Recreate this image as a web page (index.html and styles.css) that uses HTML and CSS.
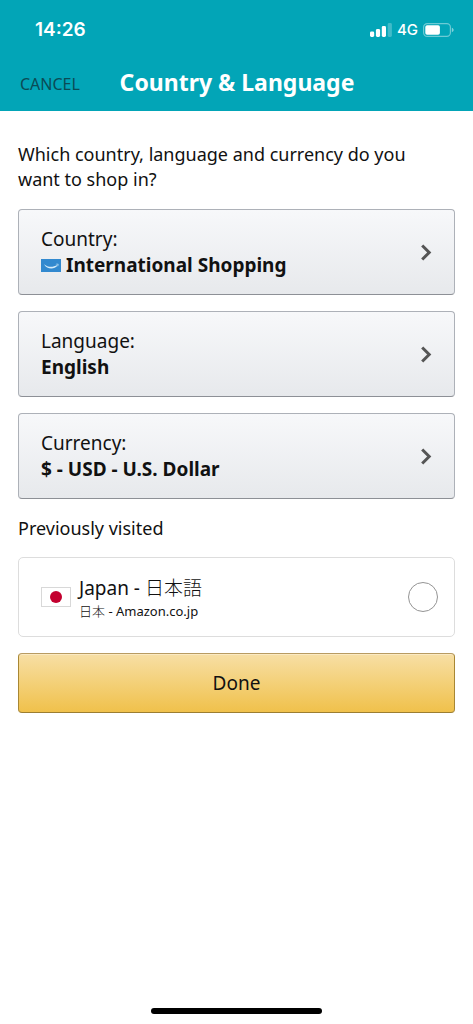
FILE: index.html
```html
<!DOCTYPE html>
<html lang="en">
<head>
<meta charset="utf-8">
<meta name="viewport" content="width=device-width, initial-scale=1">
<title>Country &amp; Language</title>
<link rel="stylesheet" href="styles.css">
</head>
<body>
<div class="screen">
  <header class="header">
    <div class="status">
      <time class="clock">14:26</time>
      <div class="indicators">
        <svg class="signal" viewBox="0 0 22 14" aria-hidden="true">
          <rect x="0" y="8.5" width="4.2" height="5.5" rx="1.4"/>
          <rect x="5.9" y="6" width="4.2" height="8" rx="1.4"/>
          <rect x="11.8" y="3" width="4.2" height="11" rx="1.4"/>
          <rect x="17.7" y="0" width="4.2" height="14" rx="1.4" opacity=".25"/>
        </svg>
        <span class="network">4G</span>
        <svg class="battery" viewBox="0 0 31 14" aria-hidden="true">
          <rect x=".6" y=".6" width="26.8" height="12.8" rx="3.6" fill="none" stroke="#fff" stroke-width="1.2" opacity=".42"/>
          <rect x="2.3" y="2.2" width="14.6" height="9.6" rx="1.8"/>
          <path d="M28.8 4.8c1.2.4 1.8 1.200 1.800 2.200s-.6 1.800-1.800 2.200z" opacity=".5"/>
        </svg>
      </div>
    </div>
    <div class="navbar">
      <button class="cancel" type="button">CANCEL</button>
      <h1 class="title">Country &amp; Language</h1>
    </div>
  </header>
  <main class="content">
    <p class="question">Which country, language and currency do you want to shop in?</p>
    <div class="options">
      <button class="option" type="button">
        <span class="option-text">
          <span>Country:</span>
          <span class="value">
            <svg class="globe-flag" viewBox="0 0 20 13" aria-hidden="true"><rect width="20" height="13" fill="#3289cf"/><path d="M3 5.200c3.700 3.200 9 3.300 13.200.7l.5.700c-3.700 4.200-10.700 3.900-13.700-1.400z" fill="#d5ecfa"/><path d="M14.500 5.300c1.200-.6 2.800-.6 3 0s-.2 2-.9 2.500c.2-.8.500-1.500.2-1.900s-1.300-.4-2.300-.6z" fill="#b9def5"/></svg>
            International Shopping
          </span>
        </span>
        <svg class="chevron" viewBox="0 0 12 18" aria-hidden="true"><path d="M2.200 2.500L9.200 9.500l-7 7"/></svg>
      </button>
      <button class="option" type="button">
        <span class="option-text">
          <span>Language:</span>
          <span class="value">English</span>
        </span>
        <svg class="chevron" viewBox="0 0 12 18" aria-hidden="true"><path d="M2.200 2.500L9.200 9.500l-7 7"/></svg>
      </button>
      <button class="option" type="button">
        <span class="option-text">
          <span>Currency:</span>
          <span class="value">$ - USD - U.S. Dollar</span>
        </span>
        <svg class="chevron" viewBox="0 0 12 18" aria-hidden="true"><path d="M2.200 2.500L9.200 9.500l-7 7"/></svg>
      </button>
    </div>
    <h2 class="subheading">Previously visited</h2>
    <label class="visited" for="japan">
      <svg class="japan-flag" viewBox="0 0 30 20" aria-hidden="true"><rect x=".5" y=".5" width="29" height="19" fill="#fff" stroke="#d8d8d8"/><circle cx="15" cy="10" r="6" fill="#c3002f"/></svg>
      <span class="visited-text">
        <span class="visited-name">Japan - <span lang="ja">日本語</span></span>
        <span class="visited-site"><span lang="ja">日本</span> - Amazon.co.jp</span>
      </span>
      <input class="radio" type="radio" id="japan" name="visited">
    </label>
    <button class="done" type="button">Done</button>
  </main>
  <footer class="footer"><div class="home-bar"></div></footer>
</div>
</body>
</html>
```
FILE: styles.css
```css
* {
  box-sizing: border-box;
}

body {
  margin: 0;
  background: #fff;
  color: #111;
  font-family: "Noto Sans", "Noto Sans CJK JP", sans-serif;
  font-size: 19px;
  line-height: 26px;
}

button {
  font: inherit;
  color: inherit;
  cursor: pointer;
}

svg {
  flex: none;
}

.screen {
  display: flex;
  flex-direction: column;
  min-height: 100vh;
}

.header {
  background: #02a5b7;
  color: #fff;
  padding: 17px 19px 13px 20px;
}

.status {
  display: flex;
  align-items: center;
  justify-content: space-between;
  padding-left: 15px;
  font-family: Inter, sans-serif;
}

.clock {
  font-size: 19px;
  font-weight: 600;
}

.indicators {
  display: flex;
  align-items: center;
  gap: 5px;
  fill: #fff;
}

.signal {
  width: 22px;
  height: 14px;
}

.network {
  font-size: 15px;
  font-weight: 500;
}

.battery {
  width: 31px;
  height: 14px;
}

.navbar {
  display: grid;
  grid-template-columns: 1fr auto 1fr;
  align-items: center;
  padding-top: 24px;
}

.cancel {
  justify-self: start;
  padding: 2px 0 0;
  border: 0;
  background: none;
  color: #0b4b55;
  font-size: 16px;
}

.title {
  margin: 0;
  font-size: 23px;
  font-weight: 700;
  line-height: 31px;
}

.content {
  display: flex;
  flex-direction: column;
  padding: 31px 18px;
}

.question {
  margin: 0 0 17px;
  padding-right: 32px;
  font-size: 18px;
  line-height: 25px;
}

.options {
  display: grid;
  gap: 16px;
}

.option {
  display: flex;
  align-items: center;
  justify-content: space-between;
  min-height: 86px;
  padding: 16px 22px;
  border: 1px solid #adb1b8;
  border-bottom-color: #8d9096;
  border-radius: 4px;
  background: linear-gradient(#f7f8fa, #e7e9ec);
  text-align: left;
}

.option-text {
  display: grid;
}

.value {
  display: flex;
  align-items: center;
  gap: 5px;
  font-weight: 700;
}

.globe-flag {
  width: 20px;
  height: 13px;
}

.chevron {
  width: 12px;
  height: 18px;
  fill: none;
  stroke: #555;
  stroke-width: 3;
}

.subheading {
  margin: 16px 0;
  font-size: 18px;
  font-weight: 400;
}

.visited {
  display: flex;
  align-items: center;
  gap: 8px;
  min-height: 80px;
  padding: 14px 16px 14px 22px;
  border: 1px solid #ddd;
  border-radius: 5px;
}

.japan-flag {
  width: 30px;
  height: 20px;
}

.visited-text {
  display: grid;
  flex: 1;
}

.visited-name {
  line-height: 25px;
}

.visited [lang="ja"] {
  font-family: "Noto Sans CJK JP", sans-serif;
  font-weight: 300;
}

.visited-site {
  font-size: 13px;
  line-height: 20px;
}

.radio {
  appearance: none;
  width: 30px;
  height: 30px;
  margin: 0;
  border: 1px solid #949494;
  border-radius: 50%;
  background: #fff;
}

.radio:checked {
  border: 9px solid #e47911;
}

.done {
  min-height: 60px;
  margin-top: 16px;
  border: 1px solid #a88734;
  border-top-color: #b89b62;
  border-bottom-color: #9c7e31;
  border-radius: 4px;
  background: linear-gradient(#f7dfa5, #f0c14b);
  box-shadow: inset 0 1px 0 #fbeac3;
}

.footer {
  display: flex;
  justify-content: center;
  margin-top: auto;
  padding: 10px 0;
}

.home-bar {
  width: 36%;
  height: 6px;
  border-radius: 3px;
  background: #000;
}
```
